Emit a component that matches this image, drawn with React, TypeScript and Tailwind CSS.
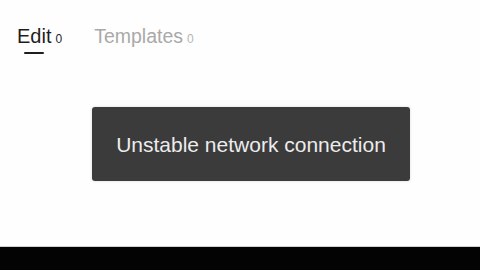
export default function App() {
  return (
    <div className="flex h-[270px] w-[480px] flex-col bg-[#fefefe] font-['Liberation_Sans',Arial,sans-serif]">
      {/* tabs */}
      <div className="flex items-start gap-[32px] pl-[17px] pt-[24px]">
        <div className="flex items-baseline">
          <div className="flex flex-col items-center">
            <span className="text-[20px] leading-[24px] text-[#1e1e1e]">Edit</span>
            <span className="mt-[4px] h-[2px] w-[20px] rounded-full bg-[#1e1e1e]" />
          </div>
          <span className="ml-[4px] text-[12px] text-[#1e1e1e]">0</span>
        </div>
        <div className="flex items-baseline">
          <span className="text-[19.5px] leading-[24px] text-[#a9a9a9]">Templates</span>
          <span className="ml-[4px] text-[12px] text-[#b5b5b5]">0</span>
        </div>
      </div>

      {/* toast */}
      <div className="ml-[92px] mt-[53px] flex h-[74px] w-[318px] items-center justify-center rounded-[3px] bg-[#3b3b3b] pt-[2px] shadow-[0_0_3px_rgba(0,0,0,0.15)]">
        <span className="text-[21px] text-[#ececec]">Unstable network connection</span>
      </div>

      <div className="flex-1" />
      <div className="h-[24px] border-t border-[#cfcfcf] bg-[#030303]" />
    </div>
  );
}
